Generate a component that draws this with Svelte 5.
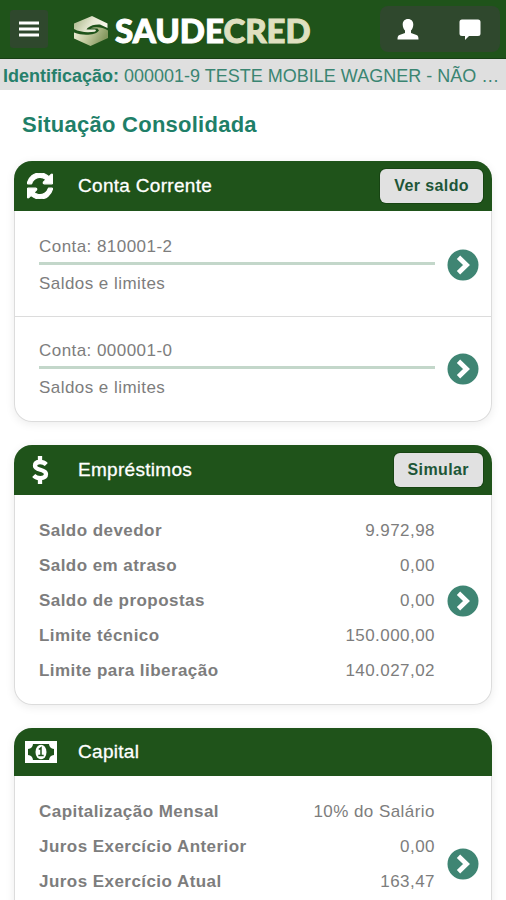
<script>
	const contas = ["810001-2", "000001-0"];

	const emprestimos = [
		["Saldo devedor", "9.972,98"],
		["Saldo em atraso", "0,00"],
		["Saldo de propostas", "0,00"],
		["Limite técnico", "150.000,00"],
		["Limite para liberação", "140.027,02"]
	];

	const capital = [
		["Capitalização Mensal", "10% do Salário"],
		["Juros Exercício Anterior", "0,00"],
		["Juros Exercício Atual", "163,47"]
	];
</script>

{#snippet go()}
	<button class="go" aria-label="Abrir">
		<svg viewBox="0 0 32 32" width="32" height="32">
			<circle cx="16" cy="16" r="15.5" fill="#3f8573" />
			<path d="M11.500 8.300l8 7.700-8 7.700" fill="none" stroke="#fff" stroke-width="4.800" />
		</svg>
	</button>
{/snippet}

{#snippet values(rows)}
	<div class="values">
		<dl>
			{#each rows as [label, value]}
				<div class="line">
					<dt>{label}</dt>
					<dd>{value}</dd>
				</div>
			{/each}
		</dl>
		{@render go()}
	</div>
{/snippet}

<div class="page">
	<header>
		<button class="menu" aria-label="Menu">
			<svg viewBox="0 0 20 16" width="20" height="16">
				<path d="M0 2h20M0 8h20M0 14h20" stroke="#fff" stroke-width="3" />
			</svg>
		</button>

		<div class="logo">
			<svg viewBox="0 0 36 32" width="36" height="32">
				<defs>
					<linearGradient id="upper" x1="0" y1="0" x2="1" y2="0.3">
						<stop offset="0" stop-color="#a3b283" />
						<stop offset="0.6" stop-color="#e6e8d2" />
						<stop offset="1" stop-color="#f6f6ea" />
					</linearGradient>
					<linearGradient id="lower" x1="0" y1="0" x2="1" y2="0.3">
						<stop offset="0" stop-color="#f3f2de" />
						<stop offset="0.5" stop-color="#c3ca9f" />
						<stop offset="1" stop-color="#84985f" />
					</linearGradient>
				</defs>
				<path d="M1 8.500L19 1l15.500 7.500V13L27 9.500c-5-.3-9 .8-12.500 3.500l-1 1.500h8.500c1.500.5 1 2-.5 2.200-8 1-15 .3-20.500-2.700z" fill="url(#upper)" />
				<path d="M35 15.500V23L17.500 31 1 23.500v-6c4 1.500 8 2.200 12 2.200 6 0 11-1 13-4.200l-1.500-2-7-.3c6-1.700 12-1 17.500 2.300z" fill="url(#lower)" />
			</svg>
			<span class="name">SAUDE<em>CRED</em></span>
		</div>

		<div class="actions">
			<svg viewBox="0 0 22 22" width="22" height="22">
				<path d="M11 0c3.400 0 5.300 2.300 5.300 5.600 0 2.600-1 4.700-2.300 6v2.300l5.500 2.100c1.500.7 2 1.800 2 4.500h-21c0-2.700.5-3.800 2-4.500L8 13.900v-2.300c-1.300-1.300-2.300-3.400-2.300-6C5.700 2.300 7.600 0 11 0z" fill="#fff" />
			</svg>
			<svg viewBox="0 0 22 22" width="22" height="22">
				<path d="M3 .5h16A2.500 2.500 0 0 1 21.500 3v11.500A2.500 2.500 0 0 1 19 17h-9l-4 4v-4H3a2.500 2.500 0 0 1-2.500-2.500V3A2.500 2.500 0 0 1 3 .5z" fill="#fff" />
			</svg>
		</div>
	</header>

	<p class="ident"><b>Identificação:</b> <span>000001-9 TESTE MOBILE WAGNER - NÃO …</span></p>

	<main>
		<h1>Situação Consolidada</h1>

		<section>
			<h2>
				<svg class="refresh" viewBox="0 0 1536 1536" width="26" height="26">
					<path d="M1511 928q0 5-1 7-64 268-268 434.500T764 1536q-146 0-282.500-55T238 1324l-129 129q-19 19-45 19t-45-19-19-45V960q0-26 19-45t45-19h448q26 0 45 19t19 45-19 45l-137 137q71 66 161 102t187 36q134 0 250-65t186-179q11-17 53-117 8-23 30-23h192q13 0 22.500 9.500t9.500 22.500zm25-800v448q0 26-19 45t-45 19h-448q-26 0-45-19t-19-45 19-45l138-138Q969 256 768 256q-134 0-250 65T332 500q-11 17-53 117-8 23-30 23H50q-13 0-22.500-9.500T18 608v-7q65-268 270-434.500T768 0q146 0 284 55.500T1297 212l130-129q19-19 45-19t45 19 19 45z" fill="#fff" stroke="#fff" stroke-width="70" />
				</svg>
				<span>Conta Corrente</span>
				<button class="pill">Ver saldo</button>
			</h2>
			{#each contas as conta}
				<div class="conta">
					<div class="info">
						<p>Conta: {conta}</p>
						<p>Saldos e limites</p>
					</div>
					{@render go()}
				</div>
			{/each}
		</section>

		<section class="loans">
			<h2>
				<svg viewBox="0 0 28 28" width="28" height="28">
					<path d="M20.300 8.500C18.500 6.700 16.400 6 14 6c-3 0-5 1.300-5 3.700 0 5.200 11 2.800 11 8.400 0 2.700-2.500 4-5.700 4-2.700 0-4.800-.8-6.600-2.700M14 0v6M14 22v6" fill="none" stroke="#fff" stroke-width="4.300" />
				</svg>
				<span>Empréstimos</span>
				<button class="pill">Simular</button>
			</h2>
			{@render values(emprestimos)}
		</section>

		<section class="capital">
			<h2>
				<svg class="money" viewBox="0 0 32 22" width="32" height="22">
					<path d="M0 0h32v22H0zM8 3a5.500 5.500 0 0 1-5 5v6a5.500 5.500 0 0 1 5 5h16a5.500 5.500 0 0 1 5-5V8a5.500 5.500 0 0 1-5-5z" fill="#fff" fill-rule="evenodd" />
					<ellipse cx="16" cy="11" rx="5.500" ry="7.300" fill="#fff" />
					<path d="M13.800 8.500l2.200-1.700v7.500M13.300 14.500h5.400" fill="none" stroke="#1f531a" stroke-width="1.500" />
				</svg>
				<span>Capital</span>
			</h2>
			{@render values(capital)}
		</section>
	</main>
</div>

<style>
	:global(body) {
		background: #fff;
	}

	.page {
		height: 900px;
		overflow: hidden;
		font-family: "Liberation Sans", Arial, sans-serif;
		font-size: 17px;
		letter-spacing: 0.45px;
		color: #7d7d7d;
	}

	p,
	h1,
	h2,
	dl,
	dd {
		margin: 0;
	}

	button {
		border: 0;
		padding: 0;
		font: inherit;
		letter-spacing: inherit;
	}

	svg {
		display: block;
	}

	header {
		display: flex;
		align-items: center;
		box-sizing: border-box;
		height: 59px;
		padding: 0 6px 0 10px;
		background: #1f531a;
		border-bottom: 1px solid #173f14;
	}

	.menu {
		display: grid;
		place-items: center;
		width: 38px;
		height: 38px;
		border-radius: 3px;
		background: #2f482d;
	}

	.logo {
		display: flex;
		align-items: center;
		gap: 6px;
		margin-left: 25px;
		padding-top: 3px;
	}

	.name {
		font-family: Lato, "Liberation Sans", sans-serif;
		font-size: 33px;
		font-weight: 900;
		line-height: 32px;
		padding-bottom: 2px;
		letter-spacing: 0;
		color: #fff;
		-webkit-text-stroke: 1px currentColor;
	}

	.name em {
		font-style: normal;
		color: #dfe0c0;
	}

	.actions {
		display: flex;
		align-items: center;
		justify-content: space-between;
		box-sizing: border-box;
		width: 120px;
		height: 46px;
		margin-left: auto;
		padding: 2px 19px 0 17px;
		border-radius: 8px;
		background: #2f482d;
	}

	.ident {
		box-sizing: border-box;
		height: 31px;
		padding-left: 3px;
		background: #dfdfdf;
		color: #3a8572;
		font-size: 18px;
		line-height: 34px;
		letter-spacing: 0;
		white-space: nowrap;
	}

	.ident b {
		color: #26806b;
	}

	main {
		padding: 0 14px;
	}

	h1 {
		padding: 20px 8px 22px;
		color: #1f7f68;
		font-size: 22px;
		line-height: 29px;
		letter-spacing: 0.25px;
	}

	section {
		height: 261px;
		margin-bottom: 23px;
		border-radius: 18px;
		overflow: hidden;
		box-shadow:
			inset 0 0 0 1px #dcdcdc,
			0 2px 10px rgba(0, 0, 0, 0.08);
	}

	.loans {
		height: 260px;
	}

	h2 {
		display: flex;
		align-items: center;
		box-sizing: border-box;
		height: 50px;
		padding: 0 9px 1px 12px;
		background: #1f531a;
		color: #fff;
		font-size: 19px;
		font-weight: 400;
		letter-spacing: 0.3px;
	}

	.capital h2 {
		height: 48px;
	}

	h2 .refresh {
		margin: 0 1px;
	}

	h2 .money {
		margin: 0 -3px 0 -1px;
	}

	h2 span {
		flex: 1;
		margin-left: 24px;
		-webkit-text-stroke: 0.3px #fff;
	}

	.pill {
		height: 34px;
		padding: 0 14px;
		border-radius: 6px;
		background: #e1e1e1;
		color: #1d5637;
		font-size: 16px;
		font-weight: 700;
		letter-spacing: 0.4px;
		box-shadow: 0 0 0 1px #174413;
	}

	.conta {
		display: flex;
		align-items: center;
		justify-content: space-between;
		height: 105px;
		padding: 2px 13px 0 25px;
		box-sizing: border-box;
	}

	.conta + .conta {
		padding-top: 0;
		border-top: 1px solid #dcdcdc;
	}

	.info {
		width: 396px;
	}

	.info p {
		line-height: 37px;
	}

	.info p:first-child {
		padding-top: 4px;
		border-bottom: 3px solid #c3d7ca;
		line-height: 30px;
	}

	.values {
		display: flex;
		align-items: center;
		justify-content: space-between;
		padding: 18px 13px 0 25px;
	}

	.capital .values {
		align-items: flex-start;
	}

	.capital .go {
		margin-top: 54px;
	}

	dl {
		width: 396px;
	}

	.line {
		display: flex;
		justify-content: space-between;
		line-height: 35px;
	}

	dt {
		font-weight: 700;
	}

	.go {
		display: block;
		background: none;
	}
</style>
